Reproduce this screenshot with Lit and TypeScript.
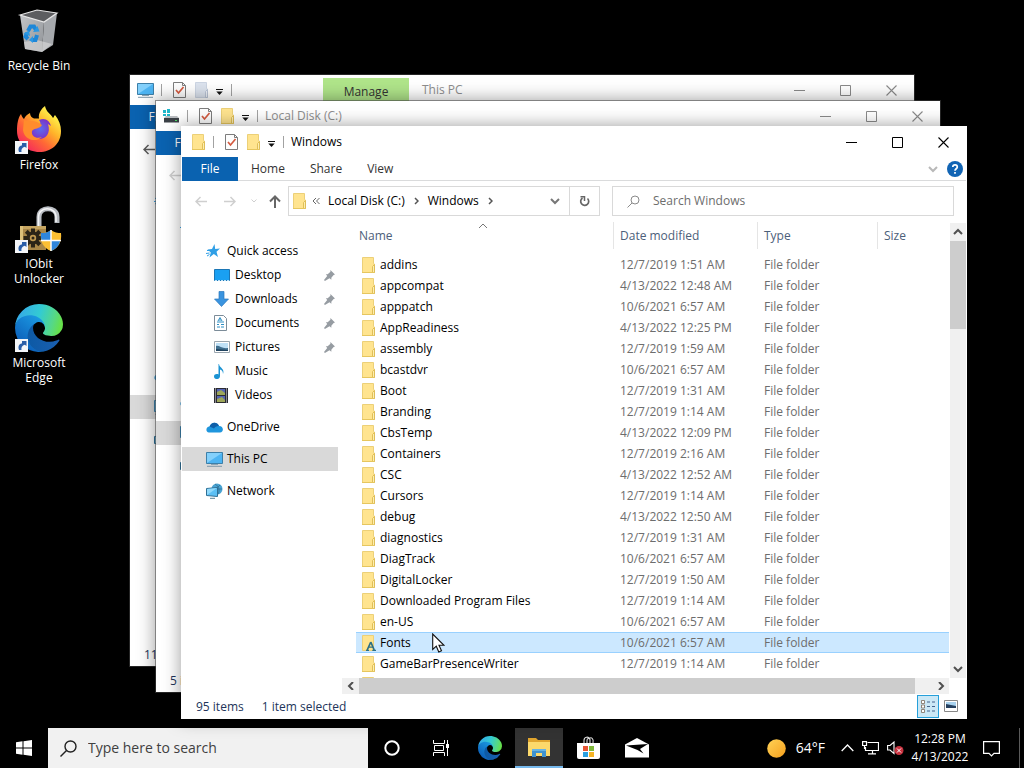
import { LitElement, html, svg, css, nothing } from "lit";
import { customElement, property } from "lit/decorators.js";
import { classMap } from "lit/directives/class-map.js";
import { styleMap } from "lit/directives/style-map.js";

const base = css`
  *, *::before, *::after { box-sizing: border-box; }
  button { font: inherit; color: inherit; background: none; border: 0; padding: 0; margin: 0; }
  a { color: inherit; text-decoration: none; }
  svg { display: block; flex: none; }
`;

const icon = (w: number, h: number, body: unknown, vb = `0 0 ${w} ${h}`) =>
  html`<svg width=${w} height=${h} viewBox=${vb} fill="none" aria-hidden="true">${body}</svg>`;

/* ---------- shared artwork ---------- */

const folder = () => icon(13, 16, svg`
  <path d="M.5 .5H11.500V6L12.500 8V15.500H.5z" fill="#ffe48f" stroke="#ecd078"/>
  <path d="M10.500 15.500V9.500L12.500 7.500V15.500z" fill="#fdeeb0" stroke="#dcba50" stroke-width=".9"/>
  <path d="M0 15.500H12" stroke="#e6c65e"/>`);

const ghostFolder = () => icon(13, 16, svg`
  <path d="M.5 .5H11.500V6L12.500 8V15.500H.5z" fill="#dce3ee" stroke="#ccd5e3"/>
  <path d="M10.500 15.500V9.500L12.500 7.500V15.500z" fill="#eef2f8" stroke="#b5c1d4" stroke-width=".9"/>`);

const fontFolder = () => icon(14, 16, svg`
  <path d="M.5 .5H11.500V15.500H.5z" fill="#ffe48f" stroke="#ecd078"/>
  <path d="M8.800 7L5.200 15M8.800 7L12.200 15" stroke="#2c6f86" stroke-width="1.700"/>
  <path d="M6.500 12.200H11M4 15.400H7M10.300 15.400H14" stroke="#2c6f86" stroke-width="1.200"/>`);

const checkPage = () => icon(13, 16, svg`
  <path d="M.5 .5H9.500L12.500 3.500V15.500H.5z" fill="#fdfdfd" stroke="#7c7c7c"/>
  <path d="M9.500 .5V3.500H12.500" stroke="#7c7c7c"/>
  <path d="M3 8L5.500 11L10.500 5" stroke="#d3593f" stroke-width="1.700"/>`);

const quickDrop = () => icon(7, 6, svg`<path d="M0 .5H7" stroke="#111"/><path d="M.3 2.500H6.700L3.500 6z" fill="#111"/>`);

const monitor = () => icon(17, 15, svg`
  <path d="M.5 .5H16.500V11.500H.5z" fill="#4db4f2" stroke="#3d7fa8"/>
  <path d="M1 11V1H16z" fill="#83d0fb"/>
  <path d="M5 12.500H12" stroke="#8aa4b4"/><path d="M1 14.300H16" stroke="#7f98a8"/>`);

const disk = () => icon(16, 14, svg`
  <path d="M0 1H3V4H0zM4 0H7V4H4zM0 5H3V7H0zM4 5H7V7H4z" fill="#1fb6c9"/>
  <path d="M3 7H14L16 9V13H1V9z" fill="#b9bcc0"/><path d="M1 9H16V13.500H1z" fill="#3b4046"/>
  <path d="M12 11.500H14" stroke="#4ddc64"/>`);

const edgeLogo = (size: number) => icon(size, size, svg`
  <defs>
    <linearGradient id="ea" x1="63" y1="178" x2="241" y2="178" gradientUnits="userSpaceOnUse"><stop offset="0" stop-color="#0c59a4"/><stop offset="1" stop-color="#1a5fb0"/></linearGradient>
    <linearGradient id="eb" x1="157" y1="80" x2="46" y2="220" gradientUnits="userSpaceOnUse"><stop offset="0" stop-color="#1b9de2"/><stop offset=".4" stop-color="#1685d4"/><stop offset="1" stop-color="#0d62bb"/></linearGradient>
    <linearGradient id="ec" x1="30" y1="70" x2="245" y2="130" gradientUnits="userSpaceOnUse"><stop offset="0" stop-color="#35aee5"/><stop offset=".45" stop-color="#33cbd2"/><stop offset=".8" stop-color="#56d886"/><stop offset="1" stop-color="#66e04b"/></linearGradient>
  </defs>
  <g transform="translate(-4.63 -4.92)">
    <path fill="url(#ea)" d="M235.680 195.460a93.730 93.730 0 0 1-10.540 4.710 101.870 101.870 0 0 1-35.900 6.460c-47.320 0-88.540-32.550-88.540-74.320A31.480 31.480 0 0 1 117.130 105c-42.800 1.800-53.800 46.400-53.800 72.530 0 73.880 68.090 81.370 82.760 81.370 7.910 0 19.840-2.300 27-4.560l1.310-.44a128.340 128.340 0 0 0 66.600-52.800 4 4 0 0 0-5.320-5.640z"/>
    <path fill="url(#eb)" d="M110.340 246.340A79.200 79.200 0 0 1 87.600 225a80.720 80.720 0 0 1 29.530-120c3.120-1.470 8.450-4.130 15.540-4a32.350 32.350 0 0 1 25.690 13 31.880 31.880 0 0 1 6.360 18.660c0-.21 24.460-79.600-80-79.600-43.900 0-80 41.660-80 78.210a130.150 130.150 0 0 0 12.110 56 128 128 0 0 0 156.380 67.110 75.550 75.550 0 0 1-62.780-8z"/>
    <path fill="url(#ec)" d="M156.940 153.780c-.81 1.050-3.300 2.500-3.300 5.660 0 2.610 1.700 5.120 4.720 7.230 14.380 10 41.490 8.680 41.560 8.680a59.560 59.560 0 0 0 30.270-8.350 61.380 61.380 0 0 0 30.430-52.880c.26-22.410-8-37.310-11.340-43.910-21.190-41.450-66.930-65.290-116.670-65.290a128 128 0 0 0-128 126.200c.48-36.540 36.800-66.050 80-66.050 3.500 0 23.460.34 42 10.070 16.340 8.580 24.900 18.940 30.850 29.210 6.180 10.670 7.280 24.150 7.280 29.520s-2.740 13.330-7.800 19.910z"/>
  </g>`, "0 0 256 256");

/* ---------- desktop artwork ---------- */

const shortcut = svg`
  <path d="M0 35H13V48H0z" fill="#f4f6f9"/>
  <path d="M4 46C2.500 42 4.500 39.500 7 39.500V37L11.500 37V42L9.800 40.800C7 41.500 6 43.500 6.500 46z" fill="#2a5ea8"/>`;

const recycleArt = () => icon(48, 48, svg`
  <defs><linearGradient id="rb" x1="0" y1="0" x2="1" y2="1"><stop offset="0" stop-color="#c3c5c8"/><stop offset="1" stop-color="#8f9296"/></linearGradient></defs>
  <path d="M5 8L22 3L42 6L29 15z" fill="#5c5d60"/>
  <path d="M5 8L29 15L27 45L10 42z" fill="url(#rb)"/>
  <path d="M29 15L42 6L38 38L27 45z" fill="#a6a9ad"/>
  <path d="M9 35L22 33L37 37L27 45L10 42z" fill="#d6d6d6" opacity=".7"/>
  <path d="M5 8L22 3L42 6L29 15z" stroke="#e8e8e8" stroke-width="1.200"/>
  <path d="M13 24L15.500 19.500H19L21 23M22 28L20.500 33H17M13 32L10.500 29.500L12 26" stroke="#1d87d8" stroke-width="4"/>
  <path d="M18 25L24.500 24.500L22.500 19zM18 29V36L14 33zM8.500 26.500L14 23.500L15 29z" fill="#2a98e4"/>`);

const firefoxArt = () => icon(48, 48, svg`
  <defs>
    <linearGradient id="fa" x1="38" y1="8" x2="8" y2="42" gradientUnits="userSpaceOnUse"><stop offset="0" stop-color="#fff04a"/><stop offset=".3" stop-color="#ffb42a"/><stop offset=".6" stop-color="#ff6a35"/><stop offset="1" stop-color="#f5255f"/></linearGradient>
    <radialGradient id="fb"><stop offset="0" stop-color="#5b6df0"/><stop offset="1" stop-color="#7b34c6"/></radialGradient>
  </defs>
  <path d="M6 8C7 11 8 12 9 13C10 10 13 8 15 7C15 10 17 12 19 12.500H24C23 7 27 2 30 0C31 6 36 8 38 12C39 11 39 10 40 9C44 14 46 19 46 25C46 38 36 46 24.500 46C12 46 2 37 2 25C2 18 3 12 6 8z" fill="url(#fa)"/>
  <path d="M24 14C30 11 35 15 36 20L33 18C36 27 31 33 24 33C18 33 14 29 15 23L22 22C25 20 27 18 24 14z" fill="url(#fb)"/>
  <path d="M9 14C13 16 20 13 27 19C25 23 19 22 17 25C16 31 22 33 27 31C21 37 9 34 8 24z" fill="#ff8c2c"/>`);

const gearTeeth = [0, 45, 90, 135, 180, 225, 270, 315];
const unlockerArt = () => icon(48, 48, svg`
  <path d="M24 23V12C24 1 42 1 42 12V18" stroke="#b9bdc3" stroke-width="5"/>
  <path d="M23.500 22V12C23.500 1 41 1 41 12V17" stroke="#f4f5f6" stroke-width="1.500"/>
  <path d="M5 21H31V45H5z" fill="#a98748"/><path d="M5 21H8V45H5z" fill="#dcc07a"/><path d="M8 21H31V24H8z" fill="#c6a561"/>
  <g transform="translate(18 33)">
    ${gearTeeth.map((a) => svg`<rect x="-2" y="-9.500" width="4" height="5" fill="#2b2417" transform="rotate(${a})"/>`)}
    <circle r="6.500" fill="#2b2417"/><circle r="3.200" fill="#c09a52"/><circle r="1.500" fill="#2b2417"/>
  </g>
  <path d="M36 25C39 27.500 43 28 46 28C47 36 44 43 36 46C28 43 25 36 26 28C30 28 33 27.500 36 25z" fill="#fbbf33"/>
  <path d="M36 25C33 27.500 30 28 26 28Q25.500 32 26.500 35H36zM36 35H45.500C44 41 41 44 36 46z" fill="#2f86dc"/>
  <path d="M36 25V46M26 35.500H46" stroke="#fff" stroke-width="1.500"/>`);

const edgeArt = () => edgeLogo(48);

/* ---------- sidebar artwork ---------- */

const star = () => icon(14, 14, svg`<path d="M8.500 0L9.200 5L14 4.500L10.500 7.800L12 13L7.800 10L3.500 13.500L4.800 8.500L1.500 5.500L6 5z" fill="#2f9fe6"/><path d="M0 9.500L3.500 9M1 12L3.500 10.500M1 6.500H3" stroke="#2f9fe6"/>`);
const desk = () => icon(16, 13, svg`<path d="M.5 .5H15.500V11.500H.5z" fill="#1aa0f2" stroke="#1b76b5"/><path d="M1 11.500H15" stroke="#bfe4fb" stroke-dasharray="2 1"/>`);
const down = () => icon(15, 16, svg`<path d="M5 .5H10V8H14.500L7.500 15.500L.5 8H5z" fill="#3a94df" stroke="#2b78bd" stroke-width=".7"/>`);
const doc = () => icon(13, 16, svg`<path d="M.5 .5H9.500L12.500 3.500V15.500H.5z" fill="#fff" stroke="#7c8c99"/><path d="M5 5H7M3 7H10M3 9.500H5M7 9.500H10M3 12H6M7 12H10" stroke="#2e8fc4"/><path d="M4 6L6 2.500L8 6" stroke="#2e8fc4"/>`);
const pic = () => icon(16, 12, svg`<path d="M.5 .5H15.500V11.500H.5z" fill="#fff" stroke="#9aa6af"/><path d="M2 2H14V10H2z" fill="#bfe1f7"/><path d="M2 5C5 4 8 8 14 7V10H2z" fill="#3f6f8f"/><path d="M2 10V8L14 9V10z" fill="#20435f"/>`);
const note = () => icon(11, 15, svg`<path d="M5 0C5.500 4 11 4.500 9 10C9 7 7.500 6 6 5.500V12C6 16 0 16 0 12.500C0 10 3 9.500 4.500 10.500V0z" fill="#1b93d3"/>`);
const film = () => icon(14, 15, svg`<path d="M0 0H14V15H0z" fill="#2b2b33"/><path d="M3 1H11V7H3zM3 8H11V14H3z" fill="#5463b3"/><path d="M3 4L7 2L11 5V7H3zM3 11L8 9L11 12V14H3z" fill="#9da65a"/><path d="M1.500 .5V15M12.500 .5V15" stroke="#e8e8e8" stroke-dasharray="1 1"/>`);
const cloud = () => icon(17, 11, svg`<path d="M3 10.500C-1 10 0 4.500 3.500 4.500C5 0 11 -1 13 4C18 4 18 10.500 14 10.500z" fill="#1f96dd"/><path d="M3.500 4.500C5 0 11 -1 13 4C10 4 9 5 8 6.500z" fill="#0f5fa8"/>`);
const network = () => icon(17, 16, svg`<circle cx="11" cy="6" r="5.500" fill="#4aa3d2"/><path d="M9 1C13 3 14 8 12 11M14 2L8 8M16 6H7" stroke="#2d6e94" stroke-width=".8"/><path d="M.5 5.500L11.500 4.500V13.500L.5 12.500z" fill="#5cc0f5" stroke="#2f6f95"/><path d="M1 12V6L11 5z" fill="#91dafc"/><path d="M4 15.300H9" stroke="#5b8296"/>`);
const pin = () => icon(11, 11, svg`<path d="M7 0L12 5L10.500 5.500L8 8.500V10.500L6 9L1 12L0 11L3.500 6.500L2 4.500H4L7 2z" fill="#969ca2"/>`, "0 0 12 12");

interface Place { label: string; art: () => unknown; root?: boolean; pinned?: boolean; spaced?: boolean }
const places: Place[] = [
  { label: "Quick access", art: star, root: true },
  { label: "Desktop", art: desk, pinned: true },
  { label: "Downloads", art: down, pinned: true },
  { label: "Documents", art: doc, pinned: true },
  { label: "Pictures", art: pic, pinned: true },
  { label: "Music", art: note },
  { label: "Videos", art: film },
  { label: "OneDrive", art: cloud, root: true, spaced: true },
  { label: "This PC", art: monitor, root: true, spaced: true },
  { label: "Network", art: network, root: true, spaced: true },
];

const files: [string, string][] = [
  ["addins", "12/7/2019 1:51 AM"],
  ["appcompat", "4/13/2022 12:48 AM"],
  ["apppatch", "10/6/2021 6:57 AM"],
  ["AppReadiness", "4/13/2022 12:25 PM"],
  ["assembly", "12/7/2019 1:59 AM"],
  ["bcastdvr", "10/6/2021 6:57 AM"],
  ["Boot", "12/7/2019 1:31 AM"],
  ["Branding", "12/7/2019 1:14 AM"],
  ["CbsTemp", "4/13/2022 12:09 PM"],
  ["Containers", "12/7/2019 2:16 AM"],
  ["CSC", "4/13/2022 12:52 AM"],
  ["Cursors", "12/7/2019 1:14 AM"],
  ["debug", "4/13/2022 12:50 AM"],
  ["diagnostics", "12/7/2019 1:31 AM"],
  ["DiagTrack", "10/6/2021 6:57 AM"],
  ["DigitalLocker", "12/7/2019 1:50 AM"],
  ["Downloaded Program Files", "12/7/2019 1:14 AM"],
  ["en-US", "10/6/2021 6:57 AM"],
  ["Fonts", "10/6/2021 6:57 AM"],
  ["GameBarPresenceWriter", "12/7/2019 1:14 AM"],
  ["", ""],
];

const chevron = (dir: "up" | "down" | "left" | "right", color: string, thin = false) => {
  const d = { up: "M1 6L5 2L9 6", down: "M1 2L5 6L9 2", left: "M7 0L3 4L7 8", right: "M3 0L7 4L3 8" }[dir];
  return icon(10, 8, svg`<path d=${d} stroke=${color} stroke-width=${thin ? 1 : 2}/>`);
};

/* ---------- explorer window ---------- */

@customElement("explorer-window")
export class ExplorerWindow extends LitElement {
  @property() heading = "";
  @property() kind: "folder" | "pc" | "disk" = "folder";
  @property() count = "";
  @property({ type: Boolean, reflect: true }) active = false;
  @property({ type: Boolean }) manage = false;
  @property({ type: Boolean }) history = false;

  static styles = [base, css`
    :host { display: grid; grid-template-rows: 30px 24px 41px minmax(0, 1fr) 24px; background: #fff; background-clip: padding-box; border: 1px solid rgba(70, 70, 70, .55); color: #000;
      font: 12px/16px "Open Sans", "Noto Sans", sans-serif; overflow: hidden; box-shadow: 0 0 16px 1px rgba(0, 0, 0, .36); }
    :host([active]) { border-color: #fff; background-clip: border-box; }
    .title { display: flex; align-items: center; padding-left: 10px; color: #8e8e8e; }
    .title.wide { padding-left: 7px; }
    :host([active]) .title { color: #000; }
    .tools { display: flex; align-items: center; }
    .bar { width: 1px; height: 12px; background: #a2a2a2; }
    .logo { width: 21px; }
    .wide .logo { width: 24px; }
    .tool { width: 22px; display: flex; }
    .tool:first-of-type { margin-left: 11px; }
    .drop { width: 15px; display: flex; padding-top: 3px; margin-left: -1px; }
    .heading { margin: 0 0 0 7px; font-size: 12px; font-weight: 400; flex: 1; }
    .manage { margin: 3px 6px 0 91px; width: 86px; height: 27px; background: #b0e58a; color: #333; }
    .ctl { width: 46px; height: 28px; display: grid; place-items: center; }
    .tabs { display: flex; align-items: stretch; gap: 1px; border-bottom: 1px solid #dadbdc; color: #333; }
    .tabs button { padding: 0 12px; }
    .tabs .file { background: #0a62b0; color: #fff; width: 56px; padding: 0; margin-bottom: -1px; }
    .tabs .fold { margin-left: auto; padding: 0; }
    .tabs .help { padding: 0 3px 0 8px; }
    .nav { display: grid; grid-template-columns: 106px minmax(0, 312fr) minmax(0, 354fr); align-items: center; padding: 0 12px 1px 0; }
    .arrows { display: grid; grid-template-columns: 38px 20px 28px 14px; justify-items: center; align-items: center; }
    .address { height: 30px; border: 1px solid #d9d9d9; display: flex; align-items: center; }
    .crumbs { display: flex; align-items: center; flex: 1; min-width: 0; padding-left: 4px; gap: 9px; white-space: nowrap; }
    .crumbs .lead { margin: 0 -1px 0 -3px; }
    .address .chev { width: 28px; display: grid; place-items: center; }
    .address .fresh { width: 30px; height: 28px; border-left: 1px solid #d9d9d9; display: grid; place-items: center; }
    .search { height: 30px; margin-left: 12px; border: 1px solid #d9d9d9; display: flex; align-items: center; gap: 13px; padding-left: 14px; }
    .search input { flex: 1; min-width: 0; border: 0; outline: 0; padding: 0; background: none; font: inherit; color: #6d6d6d; }
    .search input::placeholder { color: #6d6d6d; opacity: 1; }
    .body { display: grid; grid-template-columns: 160px minmax(0, 1fr); min-height: 0; }
    .side { padding: 17px 4px 0 0; }
    .place { display: flex; align-items: center; height: 24px; padding: 0 3px 0 32px; }
    .place .art { width: 21px; display: flex; flex: none; }
    .place.root { padding-left: 24px; }
    .place.spaced { margin-top: 8px; }
    .place.on { background: #d9d9d9; }
    .place .name { flex: 1; white-space: nowrap; }
    .files { display: grid; grid-template-columns: minmax(0, 1fr) 17px; grid-template-rows: minmax(0, 1fr) 16px; min-height: 0; }
    .view { overflow: hidden; padding-left: 14px; }
    table { width: 100%; table-layout: fixed; border-collapse: separate; border-spacing: 0; }
    .c-name { width: 258px; } .c-date { width: 144px; } .c-type { width: 120px; }
    th { height: 32px; padding: 0; vertical-align: top; text-align: left; font-weight: 400; color: #4c607a; position: relative; }
    th span { display: block; height: 27px; line-height: 28px; padding-left: 6px; border-right: 1px solid #e5e5e5; }
    th:first-child span { padding-left: 3px; }
    th:last-child span { border-right: 0; }
    .sort { position: absolute; top: 0; left: 122px; }
    td { height: 21px; padding: 0 0 0 6px; color: #6d6d6d; line-height: 19px; white-space: nowrap; border: solid transparent; border-width: 1px 0; }
    td:first-child { color: #000; }
    .cell { display: flex; align-items: center; height: 19px; }
    .cell .art { width: 18px; display: flex; }
    .sel td { background: #cce8ff; border-color: #99d1ff; }
    .vbar { display: grid; grid-template-rows: 18px minmax(0, 1fr) 18px; background: #f0f0f0; margin-left: 1px; margin-top: 1px; }
    .hbar { display: grid; grid-template-columns: 17px minmax(0, 1fr) 17px; background: #f0f0f0; }
    .vbar button, .hbar button { display: grid; place-items: center; }
    .thumb { background: #cdcdcd; }
    .hbar .thumb { height: 100%; }
    .status { display: flex; align-items: center; padding: 0 8px 0 14px; gap: 18px; color: #22345a; line-height: 18px; }
    .status > span { padding-top: 2px; }
    .modes { margin-left: auto; display: flex; align-items: center; gap: 5px; }
    .modes .on { background: #cbe8f6; border: 1px solid #26a0da; width: 22px; height: 23px; display: grid; place-items: center; }
  `];

  private logo() {
    return this.kind === "pc" ? monitor() : this.kind === "disk" ? disk() : folder();
  }

  private header() {
    const ink = this.active ? "#000" : "#8a8a8a";
    return html`<div class=${classMap({ title: true, wide: this.kind !== "folder" })}>
      <div class="tools">
        <div class="logo">${this.logo()}</div><div class="bar"></div>
        <button class="tool" aria-label="Properties">${checkPage()}</button>
        <button class="tool" aria-label="New folder">${this.kind === "pc" ? ghostFolder() : folder()}</button>
        <button class="drop" aria-label="Customize toolbar">${quickDrop()}</button><div class="bar"></div>
      </div>
      ${this.manage ? html`<button class="manage">Manage</button>` : nothing}
      <h1 class="heading">${this.heading}</h1>
      <button class="ctl" aria-label="Minimize">${icon(11, 11, svg`<path d="M0 5.500H11" stroke=${ink}/>`)}</button>
      <button class="ctl" aria-label="Maximize">${icon(11, 11, svg`<path d="M.5 .5H10.500V10.500H.5z" stroke=${ink}/>`)}</button>
      <button class="ctl" aria-label="Close">${icon(11, 11, svg`<path d="M.5 .5L10.500 10.500M10.500 .5L.5 10.500" stroke=${ink} stroke-width="1.100"/>`)}</button>
    </div>`;
  }

  private tabs() {
    return html`<div class="tabs">
      <button class="file">File</button>
      ${this.active ? html`<button>Home</button><button>Share</button><button>View</button>
        <button class="fold" aria-label="Expand the ribbon">${chevron("down", "#b8b8b8")}</button>
        <button class="help" aria-label="Help">${icon(16, 16, svg`<circle cx="8" cy="8" r="8" fill="#1164b4"/><path d="M5.800 6C5.800 3.200 10.300 3.200 10.300 6C10.300 7.700 8 7.800 8 9.800M8 11V12.700" stroke="#fff" stroke-width="1.700"/>`)}</button>` : nothing}
    </div>`;
  }

  private address() {
    const next = () => icon(5, 8, svg`<path d="M1 1L4 4L1 7" stroke="#555" stroke-width="1.500"/>`);
    return html`
      <div class="address">
        <div class="crumbs">${folder()}
          <span class="lead">${icon(8, 8, svg`<path d="M4 1L1 4L4 7M7.500 1L4.500 4L7.500 7" stroke="#666"/>`)}</span>
          <button>Local Disk (C:)</button>${next()}<button>Windows</button>${next()}
        </div>
        <button class="chev" aria-label="Previous locations">${chevron("down", "#777")}</button>
        <button class="fresh" aria-label="Refresh">${icon(11, 12, svg`<path d="M8.500 3.500A4 4 0 1 1 3.500 3" stroke="#666" stroke-width="1.700"/><path d="M1.500 1.800H5.500V6" stroke="#666" stroke-width="1.500"/>`)}</button>
      </div>
      <label class="search">
        ${icon(13, 13, svg`<circle cx="8" cy="5" r="4" stroke="#8a8a8a"/><path d="M5 8L.5 12.500" stroke="#8a8a8a"/>`)}
        <input type="text" placeholder=${`Search ${this.heading}`} aria-label="Search" />
      </label>`;
  }

  private toolbar() {
    const back = this.history ? "#5a5a5a" : "#cfcfcf";
    return html`<div class="nav">
      <div class="arrows">
        <button aria-label="Back">${icon(12, 11, svg`<path d="M12 5.500H1M5.500 1L1 5.500L5.500 10" stroke=${back} stroke-width="1.500"/>`)}</button>
        <button aria-label="Forward">${icon(12, 11, svg`<path d="M0 5.500H11M6.500 1L11 5.500L6.500 10" stroke="#cfcfcf" stroke-width="1.500"/>`)}</button>
        <button aria-label="Recent locations">${icon(6, 4, svg`<path d="M.5 .5L3 3L5.500 .5" stroke="#cfcfcf"/>`)}</button>
        <button aria-label="Up">${icon(12, 13, svg`<path d="M6 13V1.500M1 6.500L6 1.500L11 6.500" stroke="#666" stroke-width="2"/>`)}</button>
      </div>
      ${this.active ? this.address() : nothing}
    </div>`;
  }

  private sidebar() {
    return html`<nav class="side">${places.map((p) => html`
      <a href="#" aria-label=${p.label} class=${classMap({ place: true, root: !!p.root, spaced: !!p.spaced, on: p.label === "This PC" })}>
        <span class="art">${p.art()}</span>${this.active ? html`<span class="name">${p.label}</span>${p.pinned ? pin() : nothing}` : nothing}
      </a>`)}</nav>`;
  }

  private list() {
    return html`<div class="files">
      <div class="view"><table>
        <colgroup><col class="c-name" /><col class="c-date" /><col class="c-type" /><col /></colgroup>
        <thead><tr>
          <th><span>Name</span><div class="sort">${chevron("up", "#777", true)}</div></th>
          <th><span>Date modified</span></th><th><span>Type</span></th><th><span>Size</span></th>
        </tr></thead>
        <tbody>${files.map(([name, date]) => html`<tr class=${name === "Fonts" ? "sel" : ""}>
          <td><div class="cell"><span class="art">${name === "Fonts" ? fontFolder() : folder()}</span>${name}</div></td>
          <td>${date}</td><td>${name ? "File folder" : ""}</td><td></td></tr>`)}</tbody>
      </table></div>
      <div class="vbar">
        <button aria-label="Scroll up">${chevron("up", "#505050")}</button>
        <div><div class="thumb" style=${styleMap({ height: "21%" })}></div></div>
        <button aria-label="Scroll down">${chevron("down", "#505050")}</button>
      </div>
      <div class="hbar">
        <button aria-label="Scroll left">${chevron("left", "#505050")}</button>
        <div><div class="thumb" style=${styleMap({ width: "97%" })}></div></div>
        <button aria-label="Scroll right">${chevron("right", "#505050")}</button>
      </div>
    </div>`;
  }

  render() {
    return html`${this.header()}${this.tabs()}${this.toolbar()}
      <div class="body">${this.sidebar()}${this.active ? this.list() : nothing}</div>
      <div class="status"><span>${this.count}</span>
        ${this.active ? html`<span>1 item selected</span>
          <div class="modes">
            <button class="on" aria-label="Details view">${icon(16, 15, svg`
              <path d="M1.500 1.500H4.500V4.500H1.500zM1.500 6H4.500V9H1.500zM1.500 10.500H4.500V13.500H1.500z" fill="#fff" stroke="#7b6a5a" stroke-width=".8"/>
              <path d="M7 3H10M12 3H15M7 7.500H10M12 7.500H15M7 12H10M12 12H15" stroke="#44638c"/>`)}</button>
            <button aria-label="Large icons view">${icon(14, 12, svg`<path d="M.5 .5H13.500V11.500H.5z" fill="#fff" stroke="#888"/><path d="M2 2H12V8H2z" fill="#a9d3f0"/><path d="M2 4L12 6V8H2z" fill="#25405f"/>`)}</button>
          </div>` : nothing}
      </div>`;
  }
}

/* ---------- taskbar ---------- */

@customElement("task-bar")
export class TaskBar extends LitElement {
  static styles = [base, css`
    :host { display: flex; background: #000; color: #fff; font: 12px/18px "Open Sans", "Noto Sans", sans-serif; min-width: 0; }
    button { display: grid; place-items: center; }
    .start { width: 48px; }
    .search { width: 320px; background: #f1f1f1; display: flex; align-items: center; gap: 11px; padding-left: 12px; }
    .search input { flex: 1; min-width: 0; border: 0; outline: 0; padding: 0; background: none; font: inherit; font-size: 14px; color: #333; }
    .search input::placeholder { color: #404040; opacity: 1; }
    .apps { display: flex; gap: 1px; }
    .apps button { width: 48px; }
    .apps .on { background: #333; border-bottom: 2px solid #76b9ed; }
    .tray { margin-left: auto; display: flex; align-items: center; }
    .weather { display: flex; align-items: center; gap: 10px; font-size: 14px; margin-right: 16px; }
    .sys { display: flex; align-items: center; gap: 8px; margin-right: 9px; }
    .clock { width: 54px; white-space: nowrap; display: flex; flex-direction: column; align-items: center; }
    .bell { margin: 0 19px 0 16px; }
    .peek { width: 5px; align-self: stretch; border-left: 1px solid #5a5a5a; }
  `];

  render() {
    return html`
      <button class="start" aria-label="Start">${icon(16, 16, svg`<path d="M0 2.200L6.500 1.300V7.500H0zM7.500 1.200L16 0V7.500H7.500zM0 8.500H6.500V14.700L0 13.800zM7.500 8.500H16V16L7.500 14.800z" fill="#fff"/>`)}</button>
      <label class="search">
        ${icon(17, 17, svg`<circle cx="10.500" cy="6.500" r="5.500" stroke="#222" stroke-width="1.400"/><path d="M6.500 10.500L.5 16.500" stroke="#222" stroke-width="1.400"/>`)}
        <input type="text" placeholder="Type here to search" aria-label="Type here to search" />
      </label>
      <div class="apps">
        <button aria-label="Cortana">${icon(16, 16, svg`<circle cx="8" cy="8" r="6.700" stroke="#fff" stroke-width="2"/>`)}</button>
        <button aria-label="Task view">${icon(17, 16, svg`<path d="M.5 0V3.500H11.500V0M.5 16V12.500H11.500V16M1.500 5.500H10.500V10.500H1.500zM14.500 0V16" stroke="#fff"/><path d="M13 4H16V8H13z" fill="#fff"/>`)}</button>
        <button aria-label="Microsoft Edge">${edgeLogo(24)}</button>
        <button class="on" aria-label="File Explorer">${icon(22, 19, svg`
          <path d="M0 0H8L10 2H22V17H0z" fill="#e0a52e"/><path d="M0 4H22V18H0z" fill="#fcd96b"/>
          <path d="M4 19V11H18V19H14V15H8V19z" fill="#3f93cf"/><path d="M4 11H18V13H4z" fill="#67b4e4"/>`)}</button>
        <button aria-label="Microsoft Store">${icon(24, 24, svg`
          <path d="M8 7V4.500C8 .5 12.500 .5 13.500 2.500C15 1 18 2 17 7M11 7V4.500C11 2 13 2 14 3.500V7" stroke="#ddd" stroke-width="1.100"/>
          <path d="M1 7H24V21Q24 23 22 23H3Q1 23 1 21z" fill="#fff"/>
          <path d="M7 10H12V15H7z" fill="#e65535"/><path d="M13 10H18V15H13z" fill="#7fb83a"/><path d="M7 16H12V21H7z" fill="#2ba0e0"/><path d="M13 16H18V21H13z" fill="#f6b426"/>`)}</button>
        <button aria-label="Mail">${icon(24, 20, svg`<path d="M0 6.500L12 0L24 6.500V19.500H0z" fill="#fff"/><path d="M1 7.500L23 6L15 11L18.500 15.500L12.500 12z" fill="#000"/>`)}</button>
      </div>
      <div class="tray">
        <button class="weather">
          ${icon(19, 19, svg`<defs><linearGradient id="sun" x1="0" y1="0" x2="1" y2="1"><stop offset="0" stop-color="#ffd257"/><stop offset="1" stop-color="#f5a01d"/></linearGradient></defs><circle cx="9.500" cy="9.500" r="9.300" fill="url(#sun)"/>`)}<span>64°F</span>
        </button>
        <div class="sys">
          <button aria-label="Show hidden icons">${icon(13, 8, svg`<path d="M.7 7L6.500 1L12.300 7" stroke="#fff" stroke-width="1.300"/>`)}</button>
          <button aria-label="Network">${icon(17, 14, svg`<path d="M5.500 1.500H16.500V9.500H3.500V6M10.500 9.500V13M6 12.800H14" stroke="#fff" stroke-width="1.200"/><path d="M.6 .6H4.500V4.500H.6zM2.500 4.500V8" stroke="#fff" stroke-width="1.200"/>`)}</button>
          <button aria-label="Volume">${icon(17, 14, svg`<path d="M.6 4.500H3L7 1V12.500L3 9H.6z" stroke="#fff" stroke-width="1.100"/><circle cx="12" cy="9.500" r="4.500" fill="#c9323f"/><path d="M10 7.500L14 11.500M14 7.500L10 11.500" stroke="#fff"/>`)}</button>
        </div>
        <button class="clock"><span>12:28 PM</span><span>4/13/2022</span></button>
        <button class="bell" aria-label="Notifications">${icon(17, 17, svg`<path d="M.6 1.600H16.400V13.400H11L8.500 16L6 13.400H.6z" stroke="#fff" stroke-width="1.200"/>`)}</button>
        <div class="peek"></div>
      </div>`;
  }
}

/* ---------- desktop ---------- */

const shortcuts = [
  { label: "Recycle Bin", art: recycleArt, link: false },
  { label: "Firefox", art: firefoxArt, link: true },
  { label: "IObit Unlocker", art: unlockerArt, link: true },
  { label: "Microsoft Edge", art: edgeArt, link: true },
];

@customElement("app-root")
export class AppRoot extends LitElement {
  static styles = [base, css`
    :host { display: grid; grid-template-rows: minmax(0, 1fr) 40px; height: 100vh; background: #000; overflow: hidden;
      font: 12px/15px "Open Sans", "Noto Sans", sans-serif; color: #fff; }
    .desktop { position: relative; min-width: 0; }
    .icons { display: flex; flex-direction: column; padding-top: 7px; width: 78px; }
    .item { height: 99px; display: flex; flex-direction: column; align-items: center; gap: 3px; text-align: center; padding: 0 6px; }
    .art { display: grid; }
    .art > * { grid-area: 1 / 1; }
    .label { text-shadow: 0 1px 2px #000; }
    explorer-window { position: absolute; }
    .first { inset: 74px 109px 61px 129px; }
    .second { inset: 100px 83px 35px 155px; }
    .third { inset: 126px 57px 9px 181px; }
    .cursor { position: absolute; left: 432px; top: 633px; }
  `];

  render() {
    return html`
      <main class="desktop">
        <div class="icons">${shortcuts.map((s) => html`
          <a class="item" href="#"><span class="art">${s.art()}${s.link ? icon(48, 48, shortcut) : nothing}</span><span class="label">${s.label}</span></a>`)}
        </div>
        <explorer-window class="first" heading="This PC" kind="pc" count="11 items" manage history></explorer-window>
        <explorer-window class="second" heading="Local Disk (C:)" kind="disk" count="5 items"></explorer-window>
        <explorer-window class="third" heading="Windows" kind="folder" count="95 items" active></explorer-window>
        <div class="cursor">${icon(13, 20, svg`<path d="M.7 1V16.500L4.300 13.200L6.800 19L9.500 17.800L7 12.300H12z" fill="#fff" stroke="#111" stroke-width="1.100"/>`)}</div>
      </main>
      <task-bar></task-bar>`;
  }
}
